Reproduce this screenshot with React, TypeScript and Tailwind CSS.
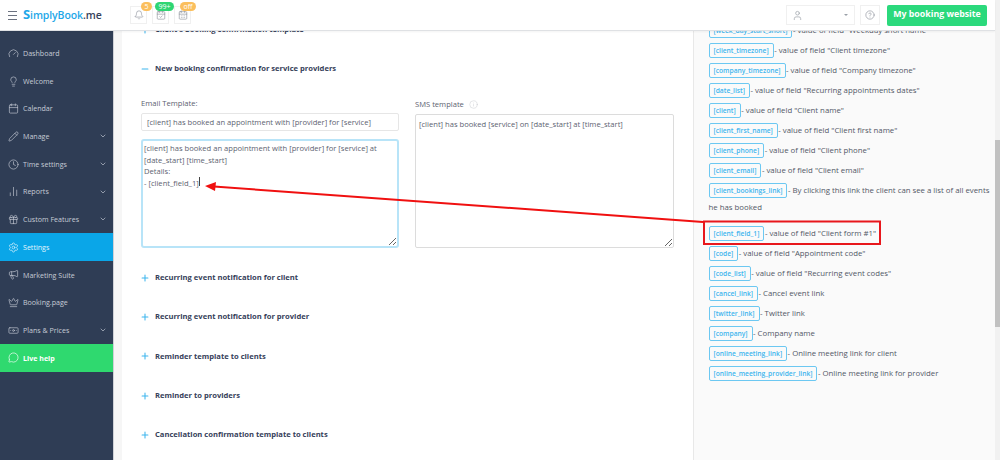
import {
  Banknote,
  Bell,
  CalendarCheck,
  Calendar,
  CalendarDays,
  ChartNoAxesColumn,
  ChevronDown,
  CircleHelp,
  Clock,
  Crown,
  Gauge,
  Gift,
  Info,
  Lightbulb,
  Megaphone,
  MessageCircle,
  Minus,
  Pencil,
  Plus,
  Settings,
  User,
} from 'lucide-react';

const menu = [
  { label: 'Dashboard', icon: Gauge },
  { label: 'Welcome', icon: Lightbulb },
  { label: 'Calendar', icon: Calendar },
  { label: 'Manage', icon: Pencil, arrow: true },
  { label: 'Time settings', icon: Clock, arrow: true },
  { label: 'Reports', icon: ChartNoAxesColumn, arrow: true },
  { label: 'Custom Features', icon: Gift, arrow: true },
  { label: 'Settings', icon: Settings, active: true },
  { label: 'Marketing Suite', icon: Megaphone },
  { label: 'Booking.page', icon: Crown },
  { label: 'Plans & Prices', icon: Banknote, arrow: true },
];

const closedSections = [
  'Recurring event notification for client',
  'Recurring event notification for provider',
  'Reminder template to clients',
  'Reminder to providers',
  'Cancellation confirmation template to clients',
];

const tags = [
  ['[week_day_start_short]', '- value of field "Weekday short name"'],
  ['[client_timezone]', '- value of field "Client timezone"'],
  ['[company_timezone]', '- value of field "Company timezone"'],
  ['[date_list]', '- value of field "Recurring appointments dates"'],
  ['[client]', '- value of field "Client name"'],
  ['[client_first_name]', '- value of field "Client first name"'],
  ['[client_phone]', '- value of field "Client phone"'],
  ['[client_email]', '- value of field "Client email"'],
  ['[client_bookings_link]', '- By clicking this link the client can see a list of all events he has booked'],
  ['[client_field_1]', '- value of field "Client form #1"'],
  ['[code]', '- value of field "Appointment code"'],
  ['[code_list]', '- value of field "Recurring event codes"'],
  ['[cancel_link]', '- Cancel event link'],
  ['[twitter_link]', '- Twitter link'],
  ['[company]', '- Company name'],
  ['[online_meeting_link]', '- Online meeting link for client'],
  ['[online_meeting_provider_link]', '- Online meeting link for provider'],
];

const emailBody = `[client] has booked an appointment with [provider] for [service] at
[date_start] [time_start]
Details:
- [client_field_1]`;

function HeaderBox({ badge, badgeClass, icon: Icon }: { badge: string; badgeClass: string; icon: typeof Bell }) {
  return (
    <div className="relative flex h-[18px] w-[17px] items-center justify-center border border-[#f0f0f0]">
      <Icon className="h-[10px] w-[10px] text-[#8a8f98]" strokeWidth={1.5} />
      <span className={`absolute -top-[5px] flex h-[9px] items-center justify-center rounded-full text-[7px] leading-none text-white ${badgeClass}`}>
        {badge}
      </span>
    </div>
  );
}

function SectionTitle({ title, open }: { title: string; open?: boolean }) {
  const Icon = open ? Minus : Plus;
  return (
    <div className="flex h-[39.2px] items-center gap-[5px]">
      <Icon className="-ml-[1px] h-[10px] w-[10px] text-[#3db5ee]" strokeWidth={2.5} />
      <span className="text-[7.6px] font-bold text-[#36415a]">{title}</span>
    </div>
  );
}

export default function App() {
  return (
    <div className="flex h-[460px] w-[1000px] overflow-hidden bg-white font-['Open_Sans',sans-serif] text-[7.6px] text-[#5c6270]">
      <div className="relative flex min-w-0 flex-1 flex-col">
        <header className="z-10 flex h-[31px] shrink-0 items-center border-b border-[#dfe1e4] bg-white shadow-[0_1px_2px_rgba(0,0,0,0.05)]">
          <div className="ml-[8px] flex h-[9px] w-[9px] flex-col justify-between">
            <span className="h-px bg-[#6b7280]" />
            <span className="h-px bg-[#6b7280]" />
            <span className="h-px bg-[#6b7280]" />
          </div>
          <div className="ml-[6px] w-[107px] text-[10.5px] font-semibold tracking-[-0.1px] text-[#1ea7e8]">
            <span className="text-[13px] font-bold">S</span>implyBook<span className="text-[#36415a]">.me</span>
          </div>
          <div className="flex gap-[5px]">
            <HeaderBox badge="5" badgeClass="left-[10px] w-[11px] bg-[#fbbf5d]" icon={Bell} />
            <HeaderBox badge="99+" badgeClass="left-[2px] w-[19px] bg-[#2ed573]" icon={CalendarCheck} />
            <HeaderBox badge="off" badgeClass="left-[5px] w-[16px] bg-[#fbbf5d]" icon={CalendarDays} />
          </div>
          <div className="ml-auto flex h-[20px] w-[69px] items-center justify-between border border-[#f0f0f0] pl-[5px] pr-[6px]">
            <User className="h-[11px] w-[11px] text-[#9aa0a8]" strokeWidth={1.5} />
            <span className="border-x-[2px] border-t-[2px] border-x-transparent border-t-[#9aa0a8]" />
          </div>
          <div className="ml-[5px] flex h-[20px] w-[20px] items-center justify-center border border-[#f0f0f0]">
            <CircleHelp className="h-[10px] w-[10px] text-[#8a8f98]" strokeWidth={1.5} />
          </div>
          <div className="ml-[7px] mr-[8px] flex h-[21px] w-[100px] items-center justify-center rounded-[2px] bg-[#2bd97c] text-[8.8px] font-bold text-white">
            My booking website
          </div>
        </header>

        <div className="flex min-h-0 flex-1">
          <nav className="flex w-[113px] shrink-0 flex-col bg-[#2f3d55] text-[7.1px] text-[#c6ccd6]">
            <div className="h-[8.5px]" />
            {menu.map(item => (
              <div
                key={item.label}
                className={`flex h-[27.7px] items-center pl-[7.5px] pr-[6px] ${item.active ? 'bg-[#0aa6e8] text-[#e4f5fd]' : ''}`}
              >
                <item.icon className="h-[11px] w-[11px] shrink-0" strokeWidth={1.4} />
                <span className="ml-[4.5px] flex-1 whitespace-nowrap">{item.label}</span>
                {item.arrow && <ChevronDown className="h-[8px] w-[8px]" strokeWidth={2} />}
              </div>
            ))}
            <div className="flex h-[27.7px] items-center bg-[#2fd96f] pl-[7.5px] font-bold text-white">
              <MessageCircle className="h-[11px] w-[11px]" strokeWidth={1.4} />
              <span className="ml-[4.5px]">Live help</span>
            </div>
          </nav>

          <div className="w-[9px] shrink-0 border-l border-[#cfd1d6] bg-[#f6f6f6]" />

          <main className="w-[571px] shrink-0 overflow-hidden pl-[19px] pr-[19px]">
            <div className="-mt-[21px]">
              <SectionTitle title="Client's booking confirmation template" />
              <SectionTitle title="New booking confirmation for service providers" open />
            </div>
            <div className="mt-[9px] flex gap-[16px]">
              <div className="w-[258px]">
                <div className="h-[13px] leading-[13px]">Email Template:</div>
                <input
                  readOnly
                  value="[client] has booked an appointment with [provider] for [service]"
                  className="mt-[3px] block h-[18px] w-full rounded-[2px] border border-[#e6e6e6] pl-[5px] outline-none"
                />
                <div className="relative mt-[8px]">
                  <textarea
                    readOnly
                    value={emailBody}
                    className="block h-[109px] w-full rounded-[3px] border-2 border-[#b8e4f8] px-[1px] pt-[2px] leading-[11.5px] outline-none"
                  />
                  {/* text caret of the focused field */}
                  <span className="absolute left-[58px] top-[38px] h-[9px] w-px bg-[#444]" />
                </div>
              </div>
              <div className="w-[259px]">
                <div className="mt-px flex h-[13px] items-center gap-[5px] leading-[13px]">
                  SMS template
                  <Info className="h-[9px] w-[9px] text-[#c4c8cc]" strokeWidth={1.2} />
                </div>
                <textarea
                  readOnly
                  value="[client] has booked [service] on [date_start] at [time_start]"
                  className="mt-[3px] block h-[134px] w-full rounded-[2px] border border-[#dcdcdc] px-[3px] pt-[4px] leading-[11.5px] outline-none"
                />
              </div>
            </div>
            <div className="mt-[10px]">
              {closedSections.map(title => (
                <SectionTitle key={title} title={title} />
              ))}
            </div>
          </main>

          <aside className="min-w-0 flex-1 overflow-hidden border-l border-[#e8e8e8] bg-[#fafafa] pl-[14.5px]">
            <div className="-mt-[9px]">
              {tags.map(([tag, text]) => (
                <p key={tag} className={`mb-[3px] text-[7.8px] leading-[17px] text-[#525866] ${tag === '[client_field_1]' ? 'mt-[9px]' : ''}`}>
                  <span className="mr-[0.5px] mt-px inline-block h-[15px] rounded-[2px] border border-[#6cc8f2] px-[4px] align-top text-[6.7px] font-semibold leading-[13px] text-[#3db5ee]">
                    {tag}
                  </span>
                  {text}
                </p>
              ))}
            </div>
          </aside>
        </div>

        {/* annotation drawn over the screenshot */}
        <svg className="pointer-events-none absolute left-0 top-0 z-20" width="995" height="460">
          <path d="M703 222 L214 186.5" stroke="#f01010" strokeWidth="2" fill="none" />
          <path d="M205 186 L216 182 L215 191 Z" fill="#f01010" />
          <rect x="704" y="221.5" width="176" height="22.5" fill="none" stroke="#e8171c" strokeWidth="2" />
        </svg>
      </div>

      <div className="relative w-[5px] shrink-0 bg-[#f1f1f1]">
        <div className="mt-[140px] h-[187px] bg-[#c1c1c1]" />
      </div>
    </div>
  );
}
